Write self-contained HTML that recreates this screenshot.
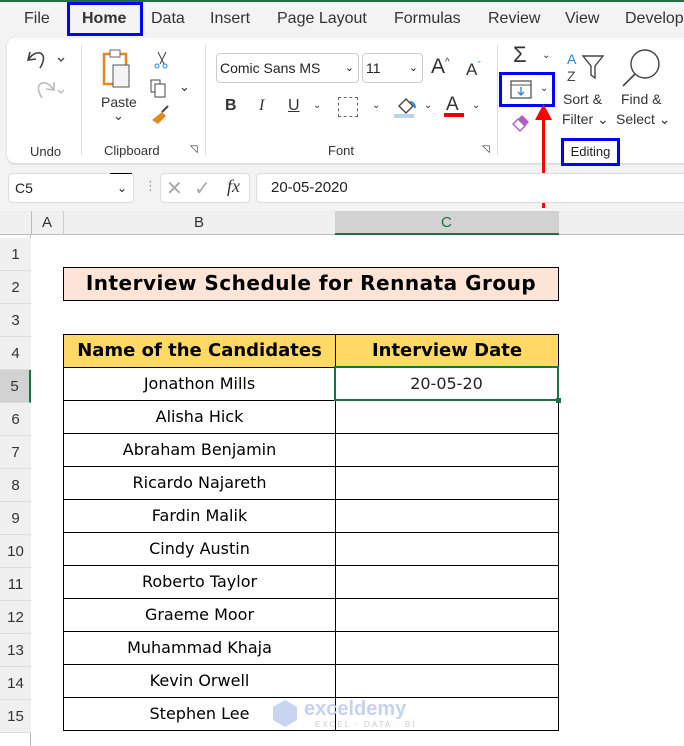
<!DOCTYPE html>
<html><head><style>
*{margin:0;padding:0;box-sizing:border-box}
body{width:684px;height:746px;overflow:hidden;background:#f3f3f3;font-family:"Liberation Sans","DejaVu Sans",sans-serif;position:relative;color:#222}
.a{position:absolute}
.tab{position:absolute;top:10px;font-size:16px;color:#333}
.rib{position:absolute;left:7px;top:38px;width:690px;height:125px;background:#fff;border-radius:8px;box-shadow:0 1px 2px #ccc}
.sep{position:absolute;top:45px;width:1px;height:110px;background:#ddd}
.lbl{position:absolute;font-size:13px;color:#333}
.rh{position:absolute;left:0;width:31px;height:33px;font-size:15px;text-align:center;line-height:33px;color:#333;border-bottom:1px solid #ddd;background:#f0f0f0}
.cell{position:absolute;height:34px;border:1px solid #000;font-family:"Comic Sans MS","DejaVu Sans",sans-serif;font-size:16px;text-align:center;line-height:31px;color:#000}
</style></head><body>
<div class="a" style="left:0;top:0;width:684px;height:2px;background:#1e7145"></div>
<div class="tab" style="left:24px">File</div>
<div class="a" style="left:67px;top:2px;width:76px;height:34px;border:3px solid #0000ff"></div>
<div class="tab" style="left:82px;font-weight:bold">Home</div>
<div class="tab" style="left:151px">Data</div>
<div class="tab" style="left:210px">Insert</div>
<div class="tab" style="left:277px">Page Layout</div>
<div class="tab" style="left:394px">Formulas</div>
<div class="tab" style="left:488px">Review</div>
<div class="tab" style="left:565px">View</div>
<div class="tab" style="left:625px">Develop</div>
<div class="rib"></div>
<div class="sep" style="left:81px"></div><div class="sep" style="left:205px"></div><div class="sep" style="left:497px"></div>
<!-- undo -->
<svg class="a" style="left:24px;top:44px" width="44" height="60"><path d="M6 8 L4 16 L12 15 M5 15 C12 4 26 8 16 24" fill="none" stroke="#444" stroke-width="1.6"/><path d="M34 14l3 3 3-3" fill="none" stroke="#444" stroke-width="1.3"/><path d="M30 38 L30 46 L22 45 M29 45 C22 34 8 38 18 54" fill="none" stroke="#bbb" stroke-width="1.6"/><path d="M34 46l3 3 3-3" fill="none" stroke="#bbb" stroke-width="1.3"/></svg>
<div class="lbl" style="left:30px;top:144px">Undo</div>
<!-- clipboard -->
<svg class="a" style="left:100px;top:48px" width="80" height="85"><rect x="4" y="6" width="22" height="30" fill="#fff" stroke="#e08a1e" stroke-width="2.5"/><rect x="10" y="2" width="10" height="7" fill="#fff" stroke="#666"/><rect x="13" y="17" width="16" height="22" fill="#f4f4f4" stroke="#555"/><path d="M58 4l6 12M66 4l-6 12" stroke="#444"/><circle cx="57" cy="18" r="2" fill="none" stroke="#2a8ad4"/><circle cx="65" cy="18" r="2" fill="none" stroke="#2a8ad4"/><rect x="51" y="32" width="9" height="12" fill="none" stroke="#444"/><rect x="55" y="36" width="10" height="13" fill="#fff" stroke="#444"/><path d="M82 40" /><path d="M52 72l10-8 4 4-8 8z" fill="#e08a1e"/><path d="M62 64l6-6" stroke="#444" stroke-width="2"/></svg>
<div class="lbl" style="left:101px;top:94px;font-size:14px">Paste</div>
<div class="lbl" style="left:113px;top:108px">⌄</div>
<div class="lbl" style="left:179px;top:79px">⌄</div>
<div class="lbl" style="left:104px;top:143px">Clipboard</div>
<div class="lbl" style="left:190px;top:144px;font-size:10px">◹</div>
<!-- font -->
<div class="a" style="left:216px;top:53px;width:143px;height:30px;border:1px solid #ccc;border-radius:4px;font-size:14px;line-height:28px;padding-left:3px">Comic Sans MS<span style="position:absolute;right:4px;font-size:11px">⌄</span></div>
<div class="a" style="left:362px;top:53px;width:61px;height:30px;border:1px solid #ccc;border-radius:4px;font-size:14px;line-height:28px;padding-left:3px">11<span style="position:absolute;right:4px;font-size:11px">⌄</span></div>
<div class="lbl" style="left:431px;top:55px;font-size:21px">A<sup style="font-size:10px">^</sup></div>
<div class="lbl" style="left:466px;top:60px;font-size:17px">A<sup style="font-size:10px;color:#2a8ad4">ˇ</sup></div>
<div class="lbl" style="left:225px;top:97px;font-size:16px;font-weight:bold">B</div>
<div class="lbl" style="left:259px;top:97px;font-size:16px;font-style:italic;font-family:'Liberation Serif'">I</div>
<div class="lbl" style="left:288px;top:97px;font-size:16px;text-decoration:underline">U</div>
<div class="lbl" style="left:313px;top:100px;font-size:10px">⌄</div>
<div class="a" style="left:338px;top:97px;width:20px;height:20px;border:1px dashed #666"></div>
<div class="lbl" style="left:372px;top:100px;font-size:10px">⌄</div>
<svg class="a" style="left:393px;top:94px" width="30" height="28"><path d="M6 12l7-7 7 7-7 7z" fill="#fff" stroke="#444" stroke-width="1.4"/><path d="M17 8c3 0 5 3 5 6" stroke="#2a8ad4" stroke-width="2" fill="none"/><rect x="1" y="20" width="20" height="4" fill="#b8d4ee"/></svg>
<div class="lbl" style="left:424px;top:100px;font-size:10px">⌄</div>
<div class="lbl" style="left:446px;top:94px;font-size:19px">A</div>
<div class="a" style="left:444px;top:113px;width:20px;height:4px;background:#e00"></div>
<div class="lbl" style="left:472px;top:100px;font-size:10px">⌄</div>
<div class="lbl" style="left:328px;top:143px">Font</div>
<div class="lbl" style="left:482px;top:144px;font-size:10px">◹</div>
<!-- editing -->
<div class="lbl" style="left:513px;top:42px;font-size:22px">Σ</div>
<div class="lbl" style="left:542px;top:50px;font-size:10px">⌄</div>
<div class="a" style="left:499px;top:72px;width:56px;height:35px;border:3px solid #0000ff"></div>
<svg class="a" style="left:510px;top:80px" width="24" height="20"><rect x="1" y="1" width="20" height="17" fill="#fff" stroke="#555" stroke-width="1.3"/><path d="M1 5h20" stroke="#555"/><path d="M11 7v8M8 12l3 3 3-3" stroke="#2a8ad4" stroke-width="1.4" fill="none"/></svg>
<div class="lbl" style="left:540px;top:83px;font-size:10px">⌄</div>
<svg class="a" style="left:511px;top:110px" width="22" height="22"><path d="M2 14l9-9 7 7-9 9z" fill="#b35cc4"/><path d="M2 14l5-5 7 7-5 5z" fill="#fff" stroke="#b35cc4" stroke-width="1.4"/></svg>
<svg class="a" style="left:563px;top:48px" width="44" height="40"><text x="4" y="16" font-size="14" fill="#2a8ad4" font-family="Liberation Sans">A</text><text x="4" y="33" font-size="14" fill="#444" font-family="Liberation Sans">Z</text><path d="M20 8h20l-8 10v12l-4-3v-9z" fill="#fff" stroke="#444" stroke-width="1.4"/></svg>
<div class="lbl" style="left:563px;top:91px;font-size:14px">Sort &amp;</div>
<div class="lbl" style="left:562px;top:111px;font-size:14px">Filter ⌄</div>
<svg class="a" style="left:620px;top:46px" width="44" height="44"><circle cx="25" cy="18" r="14" fill="#fff" stroke="#444" stroke-width="1.4"/><path d="M15 28L3 40" stroke="#444" stroke-width="1.6"/></svg>
<div class="lbl" style="left:621px;top:91px;font-size:14px">Find &amp;</div>
<div class="lbl" style="left:616px;top:111px;font-size:14px">Select ⌄</div>
<div class="a" style="left:561px;top:138px;width:59px;height:28px;border:3px solid #0000ff;background:#fff;font-size:13px;line-height:22px;text-align:center">Editing</div>
<!-- arrow -->
<div class="a" style="left:542px;top:116px;width:3px;height:92px;background:#f00"></div>
<svg class="a" style="left:535px;top:104px" width="17" height="16"><path d="M8.5 0L17 16H0z" fill="#f00"/></svg>
<!-- formula bar -->
<div class="a" style="left:8px;top:173px;width:126px;height:30px;background:#fff;border:1px solid #ddd;border-radius:4px;font-size:14px;line-height:28px;padding-left:6px">C5<span style="position:absolute;right:6px;font-size:12px">⌄</span></div>
<div class="a" style="left:110px;top:173px;width:22px;height:1px;background:#000"></div>
<div class="lbl" style="left:144px;top:178px;color:#999">⋮</div>
<div class="a" style="left:160px;top:173px;width:90px;height:30px;background:#fff;border:1px solid #ddd;border-radius:4px"></div>
<div class="lbl" style="left:166px;top:176px;font-size:20px;color:#aaa">✕</div>
<div class="lbl" style="left:194px;top:176px;font-size:20px;color:#aaa">✓</div>
<div class="lbl" style="left:227px;top:176px;font-size:18px;font-style:italic;font-family:'Liberation Serif'">fx</div>
<div class="a" style="left:256px;top:173px;width:440px;height:30px;background:#fff;border:1px solid #ddd;border-radius:4px;font-size:15px;line-height:28px;padding-left:14px">20-05-2020</div>
<!-- grid -->
<div class="a" style="left:0;top:211px;width:684px;height:535px;background:#fff"></div>
<div class="a" style="left:0;top:211px;width:684px;height:24px;background:#f0f0f0;border-bottom:1px solid #bbb"></div>
<div class="a" style="left:31px;top:211px;width:1px;height:24px;background:#bbb"></div>
<div class="a" style="left:63px;top:211px;width:1px;height:24px;background:#ccc"></div>
<div class="a" style="left:335px;top:211px;width:224px;height:24px;background:#d2d2d2;border-bottom:2px solid #1e7145"></div>
<div class="lbl" style="left:42px;top:214px;font-size:15px">A</div>
<div class="lbl" style="left:194px;top:214px;font-size:15px">B</div>
<div class="lbl" style="left:441px;top:214px;font-size:15px;color:#1e7145">C</div>
<div class="a" style="left:30px;top:235px;width:1px;height:511px;background:#bbb"></div>
<div class="rh" style="top:238px">1</div><div class="rh" style="top:271px">2</div><div class="rh" style="top:304px">3</div><div class="rh" style="top:337px">4</div><div class="rh" style="top:370px;background:#d2d2d2;border-right:2px solid #1e7145">5</div><div class="rh" style="top:403px">6</div><div class="rh" style="top:436px">7</div><div class="rh" style="top:469px">8</div><div class="rh" style="top:502px">9</div><div class="rh" style="top:535px">10</div><div class="rh" style="top:568px">11</div><div class="rh" style="top:601px">12</div><div class="rh" style="top:634px">13</div><div class="rh" style="top:667px">14</div><div class="rh" style="top:700px">15</div>
<div class="cell" style="left:63px;top:267px;width:496px;background:#fce4d6;font-weight:bold;font-size:20px;letter-spacing:0.5px">Interview Schedule for Rennata Group</div>
<div class="cell" style="left:63px;top:334px;width:273px;background:#ffd966;font-weight:bold;font-size:18px">Name of the Candidates</div>
<div class="cell" style="left:335px;top:334px;width:224px;background:#ffd966;font-weight:bold;font-size:18px">Interview Date</div>
<div class="cell" style="left:63px;top:367px;width:273px">Jonathon Mills</div><div class="cell" style="left:335px;top:367px;width:224px"></div>
<div class="cell" style="left:63px;top:400px;width:273px">Alisha Hick</div><div class="cell" style="left:335px;top:400px;width:224px"></div>
<div class="cell" style="left:63px;top:433px;width:273px">Abraham Benjamin</div><div class="cell" style="left:335px;top:433px;width:224px"></div>
<div class="cell" style="left:63px;top:466px;width:273px">Ricardo Najareth</div><div class="cell" style="left:335px;top:466px;width:224px"></div>
<div class="cell" style="left:63px;top:499px;width:273px">Fardin Malik</div><div class="cell" style="left:335px;top:499px;width:224px"></div>
<div class="cell" style="left:63px;top:532px;width:273px">Cindy Austin</div><div class="cell" style="left:335px;top:532px;width:224px"></div>
<div class="cell" style="left:63px;top:565px;width:273px">Roberto Taylor</div><div class="cell" style="left:335px;top:565px;width:224px"></div>
<div class="cell" style="left:63px;top:598px;width:273px">Graeme Moor</div><div class="cell" style="left:335px;top:598px;width:224px"></div>
<div class="cell" style="left:63px;top:631px;width:273px">Muhammad Khaja</div><div class="cell" style="left:335px;top:631px;width:224px"></div>
<div class="cell" style="left:63px;top:664px;width:273px">Kevin Orwell</div><div class="cell" style="left:335px;top:664px;width:224px"></div>
<div class="cell" style="left:63px;top:697px;width:273px">Stephen Lee</div><div class="cell" style="left:335px;top:697px;width:224px"></div>
<div class="a" style="left:334px;top:366px;width:225px;height:35px;border:2px solid #1e7145;font-family:'Comic Sans MS','DejaVu Sans',sans-serif;font-size:16px;text-align:center;line-height:31px;background:#fff">20-05-20</div>
<div class="a" style="left:556px;top:398px;width:5px;height:5px;background:#1e7145"></div>
<!-- watermark -->
<svg class="a" style="left:270px;top:698px" width="30" height="30"><path d="M15 2l12 7v13l-12 7-12-7V9z" fill="#c8d4f0"/></svg>
<div class="lbl" style="left:304px;top:698px;font-size:20px;font-weight:bold;color:#c6d2f2">exceldemy</div>
<div class="lbl" style="left:315px;top:720px;font-size:8px;color:#ccc;letter-spacing:2px">EXCEL · DATA · BI</div>
</body></html>
